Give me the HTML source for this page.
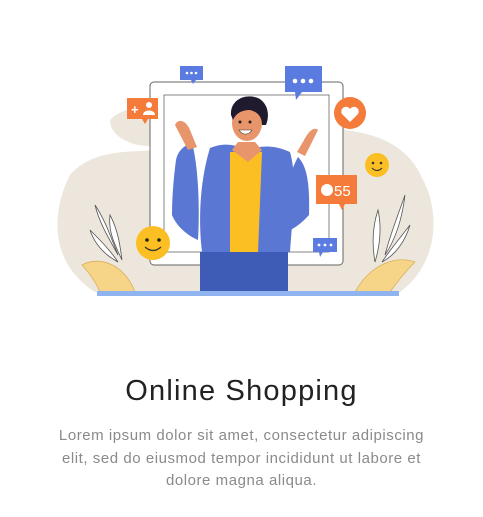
<!DOCTYPE html>
<html><head><meta charset="utf-8"><style>
html,body{margin:0;padding:0;background:#fff;width:483px;height:517px;overflow:hidden;font-family:"Liberation Sans",sans-serif}
svg{position:absolute;left:0;top:0}
h1{position:absolute;top:375px;left:0;width:483px;text-align:center;margin:0;font-size:29px;font-weight:normal;color:#222;letter-spacing:1.2px}
p{position:absolute;top:425px;left:0;width:483px;text-align:center;margin:0;font-size:15px;line-height:22.5px;color:#8a8a8a;letter-spacing:0.55px;white-space:nowrap}
</style></head><body>
<svg width="483" height="517" viewBox="0 0 483 517">
<path d="M70 175 C52 210 48 262 95 292 L400 292 C440 262 440 210 422 178 C410 150 385 135 345 130 L335 98 C300 95 270 120 230 140 C200 150 180 150 160 150 C125 152 92 150 70 175Z" fill="#ece6dc"/>
<path d="M110 120 C130 100 160 110 165 130 L165 145 C140 150 110 140 110 120Z" fill="#ece6dc"/>
<g stroke="#555" stroke-width="0.8" fill="#fff">
<path d="M95 205 C100 225 110 240 118 255 C110 235 105 220 95 205Z"/>
<path d="M110 215 C118 230 120 245 122 260 C115 245 108 232 110 215Z"/>
<path d="M90 230 C100 240 110 250 118 262 C105 255 95 245 90 230Z"/>
<path d="M405 195 C398 215 390 235 385 255 C395 240 402 220 405 195Z"/>
<path d="M378 210 C372 228 372 245 375 262 C380 245 382 228 378 210Z"/>
<path d="M410 225 C400 238 390 250 382 262 C395 255 405 242 410 225Z"/>
</g>
<path d="M82 265 C100 255 125 265 135 292 L100 292 C95 280 88 272 82 265Z" fill="#f6d589" stroke="#d8b058" stroke-width="0.8"/>
<path d="M355 292 C370 265 395 255 415 262 C405 272 395 285 390 292Z" fill="#f6d589" stroke="#d8b058" stroke-width="0.8"/>
<rect x="150" y="82" width="193" height="183" rx="4" fill="#fff" stroke="#666" stroke-width="1"/>
<rect x="164" y="95" width="165" height="157" fill="#fff" stroke="#666" stroke-width="0.8"/>
<rect x="200" y="252" width="88" height="40" fill="#3e5bb5"/>
<rect x="97" y="291" width="302" height="5" fill="#8fb4ef"/>
<path d="M176 160 C178 150 185 145 192 143 C198 165 200 205 198 240 C186 235 176 225 172 215 C172 195 174 175 176 160Z" fill="#5a77d4"/>
<path d="M298 157 C306 165 310 180 309 215 C300 225 292 230 285 232 C283 200 288 175 298 157Z" fill="#5a77d4"/>
<path d="M210 148 C225 142 235 145 248 150 C262 145 275 145 290 152 C298 180 292 220 290 252 L202 252 C198 220 200 180 210 148Z" fill="#5a77d4"/>
<path d="M230 152 L262 152 L258 252 L230 252 Z" fill="#fbbf24"/>
<path d="M232 150 L248 162 L262 150 L255 142 L238 142Z" fill="#e8956b"/>
<path d="M175 125 C178 118 186 120 190 130 L197 147 L188 150 Z" fill="#e8956b"/>
<path d="M318 130 C314 126 308 132 304 140 L297 152 L305 156 Z" fill="#e8956b"/>
<ellipse cx="247" cy="123" rx="15" ry="18" fill="#e8956b"/>
<path d="M231 115 C230 100 245 93 258 98 C268 103 270 115 266 125 L262 125 C262 117 258 112 250 110 C242 110 236 113 233 120Z" fill="#1f1a2e"/>
<circle cx="240" cy="122" r="1.5" fill="#222"/><circle cx="250" cy="122" r="1.5" fill="#222"/>
<path d="M239 130 C243 136 249 135 252 130Z" fill="#fff" stroke="#333" stroke-width="0.6"/>
<path d="M180 66 h23 v14 h-7 l-3 4 l-2 -4 h-11z" fill="#5a7be0"/>
<g fill="#fff"><circle cx="187" cy="73" r="1.3"/><circle cx="191.5" cy="73" r="1.3"/><circle cx="196" cy="73" r="1.3"/></g>
<path d="M285 66 h37 v26 h-20 l-6 8 l-1 -8 h-10z" fill="#5a7be0"/>
<g fill="#fff"><circle cx="295" cy="81" r="2.3"/><circle cx="303" cy="81" r="2.3"/><circle cx="311" cy="81" r="2.3"/></g>
<path d="M127 98 h31 v21 h-10 l-3 5 l-3 -5 h-15z" fill="#f47b3a"/>
<text x="131" y="114" font-size="13" fill="#fff" font-weight="bold">+</text>
<circle cx="149" cy="105" r="3" fill="#fff"/><path d="M143 115 c0-6 12-6 12 0z" fill="#fff"/>
<circle cx="350" cy="113" r="16" fill="#f47b3a"/>
<path d="M350 122 l-8-8 a4.5 4.5 0 0 1 8-5 a4.5 4.5 0 0 1 8 5z" fill="#fff"/>
<circle cx="377" cy="165" r="12" fill="#fbbf24"/>
<circle cx="373" cy="163" r="1.3" fill="#333"/><circle cx="381" cy="163" r="1.3" fill="#333"/>
<path d="M372 168 q5 5 10 0" stroke="#333" stroke-width="1" fill="none"/>
<path d="M316 175 h41 v29 h-12 l-3 6 l-3 -6 h-23z" fill="#f47b3a"/>
<circle cx="327" cy="190" r="6" fill="#fff"/>
<text x="334" y="196" font-size="15" fill="#fff">55</text>
<circle cx="153" cy="243" r="17" fill="#fbbf24"/>
<circle cx="147" cy="240" r="1.8" fill="#222"/><circle cx="159" cy="240" r="1.8" fill="#222"/>
<path d="M145 247 q8 7 16 0" stroke="#333" stroke-width="1.2" fill="none"/>
<path d="M313 238 h24 v14 h-14 l-3 5 l-1 -5 h-6z" fill="#5a7be0"/>
<g fill="#fff"><circle cx="319" cy="245" r="1.4"/><circle cx="325" cy="245" r="1.4"/><circle cx="331" cy="245" r="1.4"/></g>
</svg>
<h1>Online Shopping</h1>
<p>Lorem ipsum dolor sit amet, consectetur adipiscing<br>elit, sed do eiusmod tempor incididunt ut labore et<br>dolore magna aliqua.</p>
</body></html>
